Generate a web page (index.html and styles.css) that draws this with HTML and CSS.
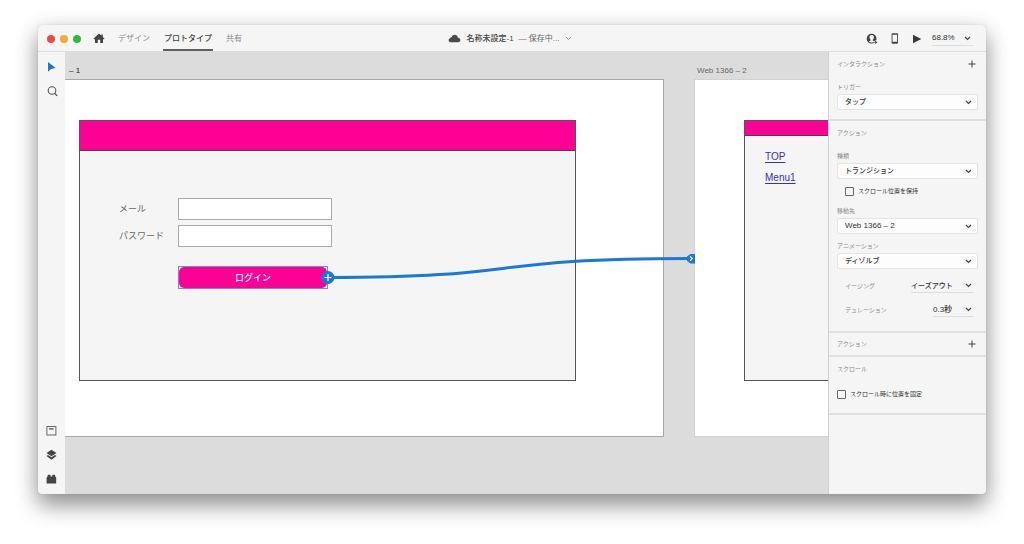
FILE: index.html
```html
<!DOCTYPE html>
<html lang="ja">
<head>
<meta charset="utf-8">
<meta name="viewport" content="width=device-width, initial-scale=1">
<title>名称未設定-1</title>
<link rel="stylesheet" href="styles.css">
</head>
<body>
<div class="window">
  <header class="titlebar">
    <div class="titlebar-left">
      <div class="lights">
        <button class="light light-close" aria-label="閉じる"></button>
        <button class="light light-min" aria-label="しまう"></button>
        <button class="light light-max" aria-label="拡大"></button>
      </div>
      <button class="icon-button home" aria-label="ホーム">
        <svg width="12" height="11" viewBox="0 0 12 11"><path d="M6 .5 8.300 2.600V1.500h1.500v2.500L11.600 5.700l-.8.600H10V10H7.200V6.800H4.800V10H2V6.300h-.8l-.8-.6z" fill="#444"/></svg>
      </button>
      <nav class="tabs">
        <a class="tab" href="#design">デザイン</a>
        <a class="tab tab-active" href="#prototype">プロトタイプ</a>
        <a class="tab" href="#share">共有</a>
      </nav>
    </div>
    <div class="doc-title">
      <svg width="13" height="9" viewBox="0 0 13 9"><path d="M3 8.200C1.500 8.200.6 7.300.6 6.200c0-1 .7-1.800 1.700-1.900C2.300 3.400 3 2.900 3.800 3 4.300 1.500 5.300.7 6.700.7c1.800 0 3.100 1.300 3.200 3.100 1.500.1 2.500 1 2.500 2.300 0 1.200-.9 2.100-2.200 2.100z" fill="#4b4b4b"/></svg>
      <h1>名称未設定-1</h1>
      <span class="doc-status">— 保存中...</span>
      <svg width="7" height="5" viewBox="0 0 7 5"><path d="m1 1 2.500 2.500L6 1" fill="none" stroke="#999"/></svg>
    </div>
    <div class="titlebar-right">
      <button class="icon-button" aria-label="共同編集">
        <svg width="12" height="12" viewBox="0 0 12 12"><path fill-rule="evenodd" d="M5.600.8a4.900 4.900 0 0 1 4.900 4.900c0 2.700-2.200 4.900-4.900 4.900S.7 8.400.7 5.700A4.900 4.900 0 0 1 5.600.8zM5.700 2C4.300 2 3.500 2.900 3.500 4.200c0 1 .4 1.900 1.100 2.500v.9L2.900 8.400c.7.700 1.600 1.200 2.700 1.200s2-.5 2.700-1.200L6.800 7.600v-.9c.7-.6 1.100-1.500 1.100-2.500C7.900 2.900 7.100 2 5.700 2z" fill="#444"/><circle cx="9.700" cy="9.400" r="2" fill="#f5f5f5"/><path d="M9.700 8v2.800M8.300 9.400h2.800" stroke="#444"/></svg>
      </button>
      <button class="icon-button" aria-label="デバイスプレビュー">
        <svg width="8" height="11" viewBox="0 0 8 11"><rect x=".6" y=".3" width="6.400" height="10.400" rx=".9" fill="#444"/><path d="M1.500 1.700h4.600v7H1.500z" fill="#f5f5f5"/></svg>
      </button>
      <button class="icon-button" aria-label="再生">
        <svg width="10" height="10" viewBox="0 0 10 10"><path d="M1 .8v8.400L9.300 5z" fill="#3a3a3a"/></svg>
      </button>
      <div class="pick pick-line pick-zoom">
        <select aria-label="ズーム"><option>68.8%</option></select>
        <svg width="7" height="5" viewBox="0 0 7 5"><path d="m1 1 2.500 2.500L6 1" fill="none" stroke="#444" stroke-width="1.200"/></svg>
      </div>
    </div>
  </header>

  <div class="workspace">
    <aside class="tools">
      <div class="tool-group">
        <button class="icon-button" aria-label="選択">
          <svg width="12" height="12" viewBox="0 0 12 12"><path d="M2 1v9.800L5 7.900 9.700 7z" fill="#1877d8"/></svg>
        </button>
        <button class="icon-button" aria-label="ズームツール">
          <svg width="12" height="12" viewBox="0 0 12 12"><circle cx="6" cy="5.500" r="3.800" fill="none" stroke="#555" stroke-width="1.100"/><path d="m8.600 8.200 2.600 2.700" stroke="#555" stroke-width="1.300"/></svg>
        </button>
      </div>
      <div class="tool-group">
        <button class="icon-button" aria-label="アセット">
          <svg width="12" height="12" viewBox="0 0 12 12"><rect x=".9" y="1.500" width="9" height="8.500" fill="none" stroke="#666"/><path d="M3.200 3.900h4.400" stroke="#444" stroke-width="1.200"/></svg>
        </button>
        <button class="icon-button" aria-label="レイヤー">
          <svg width="12" height="12" viewBox="0 0 12 12"><path d="M5.500.8 10.500 4l-5 3.200L.5 4z" fill="#444"/><path d="m.5 7 1.500-1 3.500 2.300L9 6l1.500 1-5 3.800z" fill="#444"/></svg>
        </button>
        <button class="icon-button" aria-label="プラグイン">
          <svg width="12" height="12" viewBox="0 0 12 12"><path d="M.6 4.500 1.600 3.500V2.500q0-.7.700-.7h1.600q.7 0 .7.700v1h1.600v-1q0-.7.700-.7h1.600q.7 0 .7.700v1l1 1v6H.6z" fill="#444"/></svg>
        </button>
      </div>
    </aside>

    <main class="canvas">
      <section class="artboard artboard-login">
        <h2 class="artboard-name">– 1</h2>
        <div class="board">
          <div class="page">
            <div class="page-head"></div>
            <form class="login">
              <label for="mail">メール</label><input id="mail" type="email">
              <label for="pass">パスワード</label><input id="pass" type="password">
              <div class="selection"><button type="button" class="login-button">ログイン</button></div>
            </form>
          </div>
        </div>
      </section>
      <section class="artboard artboard-menu">
        <h2 class="artboard-name">Web 1366 – 2</h2>
        <div class="board">
          <div class="page">
            <div class="page-head"></div>
            <nav class="menu"><a href="#top">TOP</a><a href="#menu1">Menu1</a></nav>
          </div>
        </div>
      </section>
      <svg class="wire" width="640" height="60" viewBox="0 0 640 60">
        <path d="M263 37.500C465 37.500 415 18.500 625 18.500" fill="none" stroke="#1b78d6" stroke-width="3"/>
        <circle cx="263" cy="37.500" r="6.500" fill="#1b78d6"/>
        <path d="M263 34v7M259.500 37.500h7" stroke="#fff" stroke-width="1.200"/>
        <path d="M630 14v9.500h-4.500l-3.500-2.500v-4.500l3.500-2.500z" fill="#1b78d6"/>
        <path d="m625 16.300 2.300 2.300-2.300 2.300" fill="none" stroke="#fff" stroke-width="1.100"/>
      </svg>
    </main>

    <aside class="panel">
      <section class="section">
        <div class="section-head"><h3>インタラクション</h3>
          <button class="icon-button" aria-label="インタラクションを追加"><svg width="8" height="8" viewBox="0 0 8 8"><path d="M4 .5v7M.5 4h7" stroke="#444"/></svg></button></div>
        <div class="field"><label for="trigger">トリガー</label>
          <div class="pick pick-box"><select id="trigger"><option>タップ</option></select>
            <svg width="7" height="5" viewBox="0 0 7 5"><path d="m1 1 2.500 2.500L6 1" fill="none" stroke="#444" stroke-width="1.200"/></svg></div></div>
      </section>

      <section class="section section-action">
        <div class="section-head"><h3>アクション</h3></div>
        <div class="field"><label for="kind">種類</label>
          <div class="pick pick-box"><select id="kind"><option>トランジション</option></select>
            <svg width="7" height="5" viewBox="0 0 7 5"><path d="m1 1 2.500 2.500L6 1" fill="none" stroke="#444" stroke-width="1.200"/></svg></div></div>
        <label class="check check-indent"><input type="checkbox">スクロール位置を保持</label>
        <div class="field"><label for="dest">移動先</label>
          <div class="pick pick-box"><select id="dest" class="latin"><option>Web 1366 – 2</option></select>
            <svg width="7" height="5" viewBox="0 0 7 5"><path d="m1 1 2.500 2.500L6 1" fill="none" stroke="#444" stroke-width="1.200"/></svg></div></div>
        <div class="field"><label for="anim">アニメーション</label>
          <div class="pick pick-box"><select id="anim"><option>ディゾルブ</option></select>
            <svg width="7" height="5" viewBox="0 0 7 5"><path d="m1 1 2.500 2.500L6 1" fill="none" stroke="#444" stroke-width="1.200"/></svg></div></div>
        <div class="row"><label for="easing">イージング</label>
          <div class="pick pick-line"><select id="easing"><option>イーズアウト</option></select>
            <svg width="7" height="5" viewBox="0 0 7 5"><path d="m1 1 2.500 2.500L6 1" fill="none" stroke="#444" stroke-width="1.200"/></svg></div></div>
        <div class="row"><label for="duration">デュレーション</label>
          <div class="pick pick-line"><select id="duration" class="latin"><option>0.3秒</option></select>
            <svg width="7" height="5" viewBox="0 0 7 5"><path d="m1 1 2.500 2.500L6 1" fill="none" stroke="#444" stroke-width="1.200"/></svg></div></div>
      </section>

      <section class="section section-short">
        <div class="section-head"><h3>アクション</h3>
          <button class="icon-button" aria-label="アクションを追加"><svg width="8" height="8" viewBox="0 0 8 8"><path d="M4 .5v7M.5 4h7" stroke="#444"/></svg></button></div>
      </section>

      <section class="section section-scroll">
        <div class="section-head"><h3>スクロール</h3></div>
        <label class="check"><input type="checkbox">スクロール時に位置を固定</label>
      </section>
    </aside>
  </div>
</div>
</body>
</html>
```
FILE: styles.css
```css
* { box-sizing: border-box; }

body {
  margin: 0;
  min-height: 100vh;
  padding: 25px 38px 50px;
  display: flex;
  background: #fff;
  color: #444;
  font-family: "Liberation Sans", "Noto Sans CJK JP", sans-serif;
  font-size: 8px;
  line-height: 12px;
}

h1, h2, h3 { margin: 0; font-size: inherit; font-weight: 400; }
button, input, select { font: inherit; color: inherit; }
svg { display: block; flex: none; }
a { color: inherit; }

.window {
  flex: 1;
  min-width: 0;
  display: flex;
  flex-direction: column;
  border-radius: 4px;
  overflow: hidden;
  background: #f5f5f5;
  box-shadow: 0 0 1px rgba(0, 0, 0, .3), 0 12px 22px rgba(0, 0, 0, .38), 0 2px 22px rgba(0, 0, 0, .12);
}

.icon-button {
  display: grid;
  place-items: center;
  padding: 0;
  border: 0;
  background: none;
}

/* Title bar */
.titlebar {
  display: grid;
  grid-template-columns: 1fr auto 1fr;
  align-items: center;
  height: 27px;
  padding: 1px 13px 0 9px;
  border-bottom: 1px solid #dcdcdc;
}

.titlebar-left, .titlebar-right, .doc-title, .lights, .tabs {
  display: flex;
  align-items: center;
}

.titlebar-left { align-self: stretch; }
.titlebar-right { justify-content: flex-end; gap: 13px; }
.lights { gap: 5px; }

.light {
  width: 8px;
  height: 8px;
  padding: 0;
  border: 0;
  border-radius: 50%;
}
.light-close { background: #f04a44; }
.light-min { background: #f7ab2b; }
.light-max { background: #2fbd38; }

.home { margin-left: 12px; }
.tabs { align-self: stretch; align-items: stretch; gap: 12px; margin-left: 12px; }

.tab {
  display: flex;
  align-items: center;
  padding: 2px 1px 0;
  border-bottom: 2px solid transparent;
  color: #8a8a8a;
  text-decoration: none;
}
.tab-active { border-color: #5b615e; color: #444; font-weight: 500; }

.doc-title { gap: 5px; }
.doc-title h1 { font-weight: 500; color: #444; }
.doc-status { color: #666; }

/* Drop-downs: the chevron shares the select's grid cell */
.pick { display: grid; align-items: center; }
.pick select, .pick svg { grid-area: 1 / 1; }
.pick svg { justify-self: end; pointer-events: none; }
.pick select {
  appearance: none;
  width: 100%;
  margin: 0;
  padding: 0;
  border: 0;
  background: none;
  font-size: 7px;
  line-height: 12px;
  font-weight: 500;
  color: #333;
}
.pick select.latin { font-size: 8px; }

.pick-box { height: 16px; }
.pick-box select {
  height: 16px;
  padding: 0 18px 0 7px;
  border: 1px solid #e4e4e4;
  border-radius: 2px;
  background: #fdfdfd;
}
.pick-box svg { margin-right: 6px; }

.pick-line { height: 14px; border-bottom: 1px solid #ddd; }
.pick-line select { padding-right: 21px; }
.pick-line svg { margin-right: 2px; }
.pick-zoom { margin-left: -3px; }
.pick-zoom select { padding-right: 18px; font-size: 8px; }

/* Work area */
.workspace { flex: 1; display: flex; min-height: 0; }

.tools {
  flex: none;
  width: 27px;
  padding: 9px 0;
  display: flex;
  flex-direction: column;
  justify-content: space-between;
  align-items: center;
}
.tool-group { display: grid; gap: 12px; }

.canvas {
  position: relative;
  flex: 1;
  min-width: 0;
  overflow: hidden;
  background: #dcdcdc;
}

.artboard { position: absolute; top: 13px; }
.artboard-login { left: -1px; width: 600px; }
.artboard-menu { left: 629px; width: 600px; }
.artboard-name { padding: 0 3px; line-height: 12px; color: #666; }
.artboard-login .artboard-name { padding-left: 5px; color: #222; }

.board {
  height: 358px;
  margin-top: 2px;
  padding: 40px 87px 0 14px;
  border: 1px solid #a8a8a8;
  background: #fff;
}
.artboard-menu .board { padding-left: 49px; border-color: #d2d2d2; }

.page { height: 261px; border: 1px solid #555; background: #f5f5f5; }
.page-head { height: 30px; border-bottom: 1px solid #444; background: #ff0095; }
.artboard-menu .page-head { height: 15px; }

.login {
  display: grid;
  grid-template-columns: 59px 154px;
  row-gap: 5px;
  align-items: center;
  padding: 47px 0 0 39px;
  font-size: 9px;
  color: #666;
}
.login input {
  width: 100%;
  height: 22px;
  padding: 0 4px;
  border: 1px solid #aaa;
  background: #fff;
}
.selection {
  grid-column: 2;
  width: 150px;
  height: 23px;
  margin-top: 14px;
  border: 1px solid #6b8fe0;
  background: #fff;
}
.login-button {
  display: block;
  width: 100%;
  height: 100%;
  padding: 0;
  border: 0;
  border-radius: 5px;
  background: #ff0095;
  color: #fff;
  font-weight: 500;
}

.menu {
  display: grid;
  justify-items: start;
  gap: 7px;
  padding: 14px 20px;
  font-size: 10px;
  line-height: 14px;
  color: #3a2cc4;
}
.menu a { text-underline-offset: 2px; }

.wire { position: absolute; left: 0; top: 188px; pointer-events: none; }

/* Property panel */
.panel {
  flex: none;
  width: 158px;
  border-left: 1px solid #d0d0d0;
  font-size: 6px;
  line-height: 8px;
}

.section {
  display: grid;
  padding: 6px 8px 9px;
  border-bottom: 2px solid #e0e0e0;
}
.section-action { padding: 6px 8px 14px; }
.section-short { padding: 5px 8px; }
.section-scroll { padding: 6px 8px 13px; }

.section-head {
  display: flex;
  align-items: center;
  justify-content: space-between;
  height: 12px;
  padding-right: 2px;
  margin-bottom: 5px;
  color: #888;
}
.section-short .section-head { margin-bottom: 0; }

.field { display: grid; gap: 3px; padding-top: 8px; color: #888; }

.check {
  display: flex;
  align-items: center;
  gap: 4px;
  height: 12px;
  margin-top: 8px;
  color: #333;
}
.check-indent { margin: 6px 8px 2px; }
.check input {
  appearance: none;
  width: 9px;
  height: 9px;
  margin: 0;
  border: 1px solid #666;
  border-radius: 1px;
}

.row {
  display: flex;
  align-items: center;
  justify-content: space-between;
  padding: 10px 4px 0 8px;
  color: #888;
}
```
